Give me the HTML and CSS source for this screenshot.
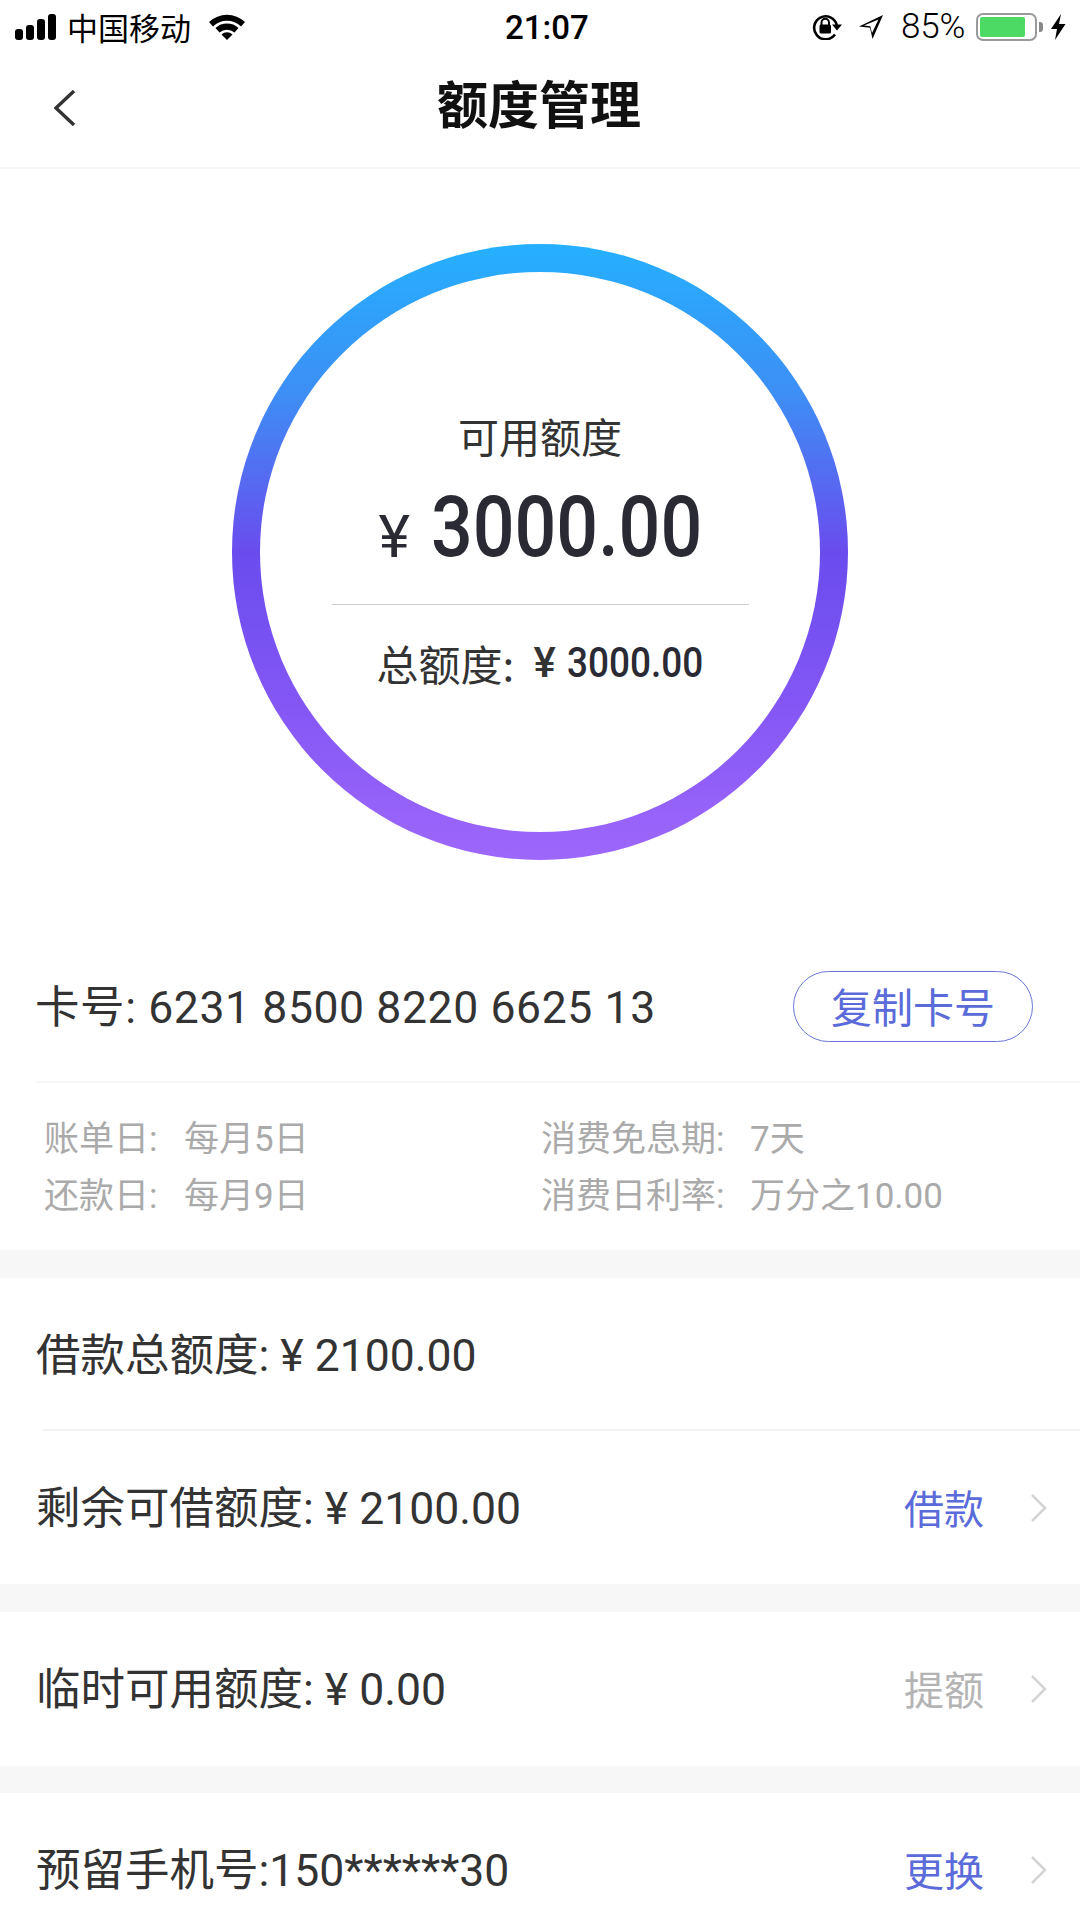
FILE: index.html
```html
<!DOCTYPE html>
<html lang="zh-CN">
<head>
<meta charset="utf-8">
<title>额度管理</title>
<link rel="stylesheet" href="styles.css">
</head>
<body>
<div class="page">
  <header class="status">
    <div class="status-left">
      <svg class="signal" viewBox="0 0 41 26"><rect x="0" y="15" width="8" height="11" rx="3"/><rect x="11" y="11" width="8" height="15" rx="3"/><rect x="22" y="5" width="8" height="21" rx="3"/><rect x="33" y="0" width="8" height="26" rx="3"/></svg>
      <span class="carrier">中国移动</span>
      <svg class="wifi" viewBox="0 0 36 26"><path d="M0 8 A26 26 0 0 1 36 8 L32 12.500 A20 20 0 0 0 4 12.500 Z"/><path d="M6.500 14 A17 17 0 0 1 29.500 14 L25.500 18.500 A11.500 11.500 0 0 0 10.500 18.500 Z"/><path d="M12.500 20.500 A8 8 0 0 1 23.500 20.500 L18 26 Z"/></svg>
    </div>
    <div class="clock">21:07</div>
    <div class="status-right">
      <svg class="lock" viewBox="0 0 30 26"><path d="M23 20.500 A11.500 11.500 0 1 1 24.800 11" fill="none" stroke="#000" stroke-width="2.600"/><path d="M20 10.500 L30 10.500 L25 16.500 Z"/><rect x="7.500" y="10.500" width="11.500" height="9" rx="1.500"/><path d="M9.500 11 V8.500 A3.700 3.700 0 0 1 17 8.500 V11" fill="none" stroke="#000" stroke-width="2"/></svg>
      <svg class="loc" viewBox="0 0 24 24"><path d="M24 0 L0 11.500 L11 12.800 L13.500 24 Z M19.500 4.500 L13 18 L11.300 11.200 L5 10.400 Z" fill-rule="evenodd"/></svg>
      <span class="pct">85%</span>
      <div class="battery"><div class="battery-fill"></div></div>
      <div class="battery-nub"></div>
      <svg class="bolt" viewBox="0 0 16 26"><path d="M11 0 L1 15 L7 15 L5 26 L15.500 10 L9 10 Z"/></svg>
    </div>
  </header>

  <nav class="nav">
    <svg class="back" viewBox="0 0 22 36"><path d="M20 1 L2 18 L20 35" fill="none" stroke="#333" stroke-width="3.400"/></svg>
    <h1 class="title">额度管理</h1>
  </nav>

  <section class="hero">
    <div class="ring">
      <div class="ring-inner">
        <div class="ring-label">可用额度</div>
        <div class="amount"><span class="amount-yen">¥</span><span class="amount-num">3000.00</span></div>
        <div class="ring-rule"></div>
        <div class="ring-total">总额度: <span class="total-yen">¥</span><span class="total-num">3000.00</span></div>
      </div>
    </div>
  </section>

  <section class="card-row">
    <div class="row-text card-text">卡号: 6231 8500 8220 6625 13</div>
    <div class="copy-btn">复制卡号</div>
  </section>

  <section class="details">
    <div class="detail"><span class="k1">账单日:</span><span>每月5日</span></div>
    <div class="detail"><span class="k2">消费免息期:</span><span>7天</span></div>
    <div class="detail"><span class="k1">还款日:</span><span>每月9日</span></div>
    <div class="detail"><span class="k2">消费日利率:</span><span>万分之10.00</span></div>
  </section>

  <div class="band band-a"></div>

  <section class="row row-first">
    <div class="row-text">借款总额度: ¥ 2100.00</div>
  </section>
  <section class="row row-second">
    <div class="row-text">剩余可借额度: ¥ 2100.00</div>
    <div class="action link">借款</div>
    <svg class="chev" viewBox="0 0 18 28"><path d="M2 1 L15 14 L2 27" fill="none" stroke="#d4d4d4" stroke-width="2.500"/></svg>
  </section>

  <div class="band band-b"></div>

  <section class="row row-third">
    <div class="row-text">临时可用额度: ¥ 0.00</div>
    <div class="action muted">提额</div>
    <svg class="chev" viewBox="0 0 18 28"><path d="M2 1 L15 14 L2 27" fill="none" stroke="#d4d4d4" stroke-width="2.500"/></svg>
  </section>

  <div class="band band-c"></div>

  <section class="row row-fourth">
    <div class="row-text">预留手机号:150******30</div>
    <div class="action link">更换</div>
    <svg class="chev" viewBox="0 0 18 28"><path d="M2 1 L15 14 L2 27" fill="none" stroke="#d4d4d4" stroke-width="2.500"/></svg>
  </section>
</div>
</body>
</html>
```
FILE: styles.css
```css
* { box-sizing: border-box; }
html, body { margin: 0; padding: 0; background: #fff; }
body { font-family: Roboto, "Noto Sans CJK SC", sans-serif; color: #333; }
.page { width: 1080px; height: 1920px; overflow: hidden; background: #fff; }

.status { height: 60px; display: flex; align-items: center; justify-content: space-between; position: relative; padding: 0 14px 6px 15px; color: #000; }
.status svg { fill: #000; display: block; }
.status-left, .status-right { display: flex; align-items: center; }
.signal { width: 41px; height: 26px; }
.carrier { font-family: "Noto Sans CJK SC", sans-serif; font-size: 31px; line-height: 40px; margin-left: 11px; }
.wifi { width: 36px; height: 26px; margin-left: 18px; }
.clock { position: absolute; left: 505px; top: 6px; font-size: 33px; line-height: 44px; font-weight: 500; }
.lock { width: 30px; height: 26px; }
.loc { width: 24px; height: 24px; margin-left: 17px; }
.pct { font-size: 35px; line-height: 40px; margin-left: 18px; width: 66px; font-weight: 300; white-space: nowrap; letter-spacing: -0.2px; }
.battery { width: 61px; height: 28px; margin-left: 9px; border: 2.500px solid #999; border-radius: 7px; padding: 2px; }
.battery-fill { width: 85%; height: 100%; background: #4cd964; border-radius: 2px; }
.battery-nub { width: 4px; height: 10px; background: #888; border-radius: 0 3px 3px 0; margin-left: 2px; }
.bolt { width: 16px; height: 26px; margin-left: 7px; }

.nav { height: 109px; border-bottom: 2px solid #f5f5f5; display: flex; align-items: center; justify-content: center; position: relative; }
.back { position: absolute; left: 54px; top: 30px; width: 22px; height: 36px; }
.title { margin: 0 2px 24px 0; font-family: "Noto Sans CJK SC", sans-serif; font-size: 51px; line-height: 70px; font-weight: 700; color: #111; }

.hero { height: 761px; padding: 75px 0 0 232px; }
.ring { width: 616px; height: 616px; border-radius: 50%; padding: 28px; background: linear-gradient(180deg, #25b0ff 0%, #3d8ff5 24%, #6a4cee 50%, #8457f5 75%, #9e67fb 100%); }
.ring-inner { width: 560px; height: 560px; border-radius: 50%; background: #fff; padding-top: 135px; display: flex; flex-direction: column; align-items: center; }
.ring-label { font-family: "Noto Sans CJK SC", sans-serif; font-size: 41px; line-height: 56px; color: #333; }
.amount { height: 100px; margin-top: 14px; width: 417px; padding-left: 47px; display: flex; align-items: center; color: #2a2a35; }
.amount-yen { font-size: 60px; line-height: 100px; margin-top: 20px; width: 55px; }
.amount-num { font-size: 86px; line-height: 100px; font-weight: 500; transform: scaleX(0.855); transform-origin: left center; white-space: nowrap; }
.ring-rule { width: 417px; height: 1px; background: #ccc; margin-top: 27px; }
.ring-total { margin-top: 30px; font-family: "Noto Sans CJK SC", sans-serif; font-size: 42px; line-height: 56px; width: 417px; padding-left: 45px; display: flex; white-space: pre; color: #333; }
.total-yen { font-family: Roboto, sans-serif; font-weight: 500; width: 33px; margin-left: 10px; }
.total-num { font-family: Roboto, sans-serif; font-weight: 500; transform: scaleX(0.88); transform-origin: left center; color: #2a2a35; }

.card-row { height: 153px; margin-left: 36px; padding-right: 47px; display: flex; align-items: center; justify-content: space-between; border-bottom: 2px solid #f6f6f6; }
.row-text { font-size: 44.500px; line-height: 60px; color: #333; white-space: nowrap; padding-top: 2px; }
.card-text { letter-spacing: 0.6px; padding-top: 4px; margin-left: -1px; }
.copy-btn { width: 240px; height: 71px; margin-top: 2px; border: 1.500px solid #6a76d8; border-radius: 36px; display: flex; align-items: center; justify-content: center; padding-bottom: 3px; font-family: "Noto Sans CJK SC", sans-serif; font-size: 41px; color: #5b6bd9; }

.details { height: 167px; padding: 24px 0 0 44px; display: grid; grid-template-columns: 497px 1fr; grid-auto-rows: 57px; align-items: center; font-family: Roboto, "Noto Sans CJK SC", sans-serif; font-size: 35px; color: #aaa; }
.detail { display: flex; white-space: nowrap; }
.k1 { width: 140px; }
.k2 { width: 209px; }

.band { background: #f7f7f7; }
.band-a { height: 28px; }
.band-b { height: 28px; }
.band-c { height: 27px; }

.row { display: flex; align-items: center; padding: 0 32px 0 36px; position: relative; }
.row-first { height: 153px; }
.row-first::after { content: ""; position: absolute; left: 42px; right: 0; bottom: 0; height: 2px; background: #f3f3f3; }
.row-second { height: 153px; }
.row-third { height: 154px; }
.row-fourth { height: 154px; }
.action { margin-left: auto; padding-bottom: 2px; font-family: "Noto Sans CJK SC", sans-serif; font-size: 40px; line-height: 56px; }
.link { color: #5b6bd9; }
.muted { color: #b4b4b4; }
.chev { width: 18px; height: 28px; margin-left: 46px; display: block; }
```
